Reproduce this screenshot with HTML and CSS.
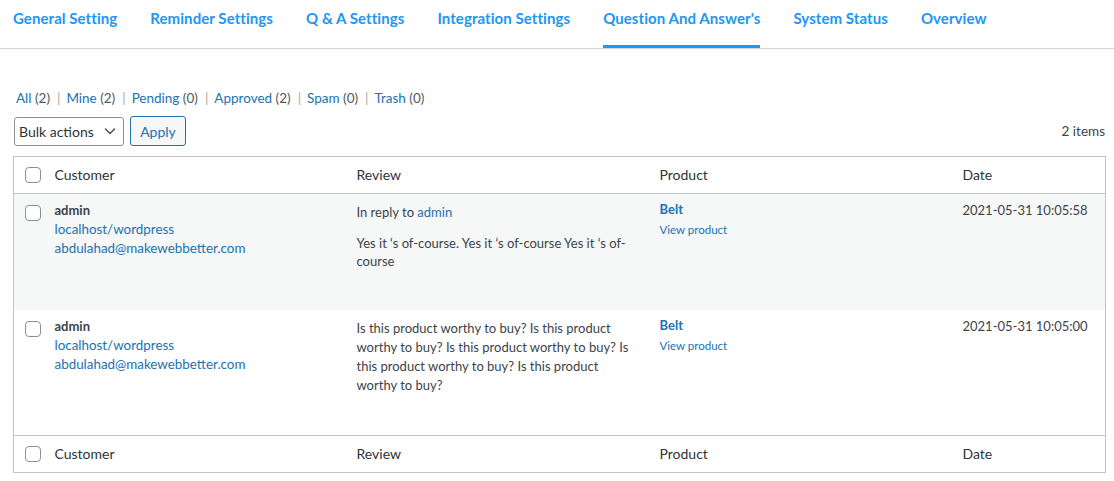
FILE: index.html
```html
<!DOCTYPE html>
<html lang="en">
<head>
<meta charset="utf-8">
<title>Question And Answer's</title>
<link rel="stylesheet" href="styles.css">
</head>
<body>
<nav class="tabs">
  <a class="tab" href="#">General Setting</a>
  <a class="tab" href="#">Reminder Settings</a>
  <a class="tab" href="#">Q &amp; A Settings</a>
  <a class="tab" href="#">Integration Settings</a>
  <a class="tab active" href="#">Question And Answer's</a>
  <a class="tab" href="#">System Status</a>
  <a class="tab" href="#">Overview</a>
</nav>

<main class="content">
  <ul class="subsubsub">
    <li><a href="#">All <span class="count">(2)</span></a><span class="sep">|</span></li>
    <li><a href="#">Mine <span class="count">(2)</span></a><span class="sep">|</span></li>
    <li><a href="#">Pending <span class="count">(0)</span></a><span class="sep">|</span></li>
    <li><a href="#">Approved <span class="count">(2)</span></a><span class="sep">|</span></li>
    <li><a href="#">Spam <span class="count">(0)</span></a><span class="sep">|</span></li>
    <li><a href="#">Trash <span class="count">(0)</span></a></li>
  </ul>

  <div class="tablenav">
    <div class="actions">
      <div class="select">
        <span>Bulk actions</span>
        <svg class="chev" width="14" height="14" viewBox="0 0 14 14"><path d="M2.5 5 L7 9.5 L11.5 5" fill="none" stroke="#50575e" stroke-width="1.6" stroke-linecap="round" stroke-linejoin="round"/></svg>
      </div>
      <button class="button">Apply</button>
    </div>
    <div class="num">2 items</div>
  </div>

  <table class="list">
    <colgroup>
      <col class="c-cb"><col class="c-cust"><col class="c-rev"><col class="c-prod"><col class="c-date">
    </colgroup>
    <thead>
      <tr>
        <th class="cb"><span class="check"></span></th>
        <th>Customer</th>
        <th>Review</th>
        <th>Product</th>
        <th>Date</th>
      </tr>
    </thead>
    <tbody>
      <tr class="alt">
        <td class="cb"><span class="check"></span></td>
        <td class="cust">
          <strong>admin</strong>
          <a href="#">localhost/wordpress</a>
          <a href="#">abdulahad@makewebbetter.com</a>
        </td>
        <td class="rev">
          <div class="reply">In reply to <a href="#">admin</a></div>
          <p class="tight">Yes it ‘s of-course. Yes it ‘s of-course Yes it ‘s of-course</p>
        </td>
        <td class="prod">
          <a class="pname" href="#">Belt</a>
          <a class="view" href="#">View product</a>
        </td>
        <td class="date">2021-05-31 10:05:58</td>
      </tr>
      <tr>
        <td class="cb"><span class="check"></span></td>
        <td class="cust">
          <strong>admin</strong>
          <a href="#">localhost/wordpress</a>
          <a href="#">abdulahad@makewebbetter.com</a>
        </td>
        <td class="rev">
          <p>Is this product worthy to buy? Is this product worthy to buy? Is this product worthy to buy? Is this product worthy to buy? Is this product worthy to buy?</p>
        </td>
        <td class="prod">
          <a class="pname" href="#">Belt</a>
          <a class="view" href="#">View product</a>
        </td>
        <td class="date">2021-05-31 10:05:00</td>
      </tr>
    </tbody>
    <tfoot>
      <tr>
        <th class="cb"><span class="check"></span></th>
        <th>Customer</th>
        <th>Review</th>
        <th>Product</th>
        <th>Date</th>
      </tr>
    </tfoot>
  </table>
</main>
</body>
</html>
```

FILE: styles.css
```css
* { box-sizing: border-box; }

body {
  margin: 0;
  background: #ffffff;
  font-family: "Lato", "Noto Sans", sans-serif;
  color: #3c434a;
  font-size: 13px;
}

a { text-decoration: none; color: #2271b1; }

.tabs {
  display: flex;
  gap: 33px;
  padding-left: 13px;
  height: 49px;
  border-bottom: 1px solid #d4d4d4;
}

.tab {
  display: block;
  height: 48px;
  padding-top: 8px;
  font-size: 15px;
  font-weight: 700;
  letter-spacing: 0.07px;
  line-height: 20px;
  color: #2196f3;
  border-bottom: 3px solid transparent;
  margin-bottom: -1px;
}

.tab.active {
  border-bottom-color: #2196f3;
}

.content {
  padding: 39px 9px 0 13px;
}

.subsubsub {
  list-style: none;
  margin: 0 0 8px 3px;
  padding: 0;
  display: flex;
  font-size: 13.5px;
  line-height: 20px;
}

.subsubsub .count { color: #50575e; }

.subsubsub .sep {
  color: #a7aaad;
  margin: 0 6px 0 7px;
}

.tablenav {
  display: flex;
  justify-content: space-between;
  align-items: center;
  height: 30px;
  margin-bottom: 10px;
  margin-left: 1px;
}

.actions { display: flex; gap: 6px; align-items: center; }

.select {
  width: 110px;
  height: 29px;
  border: 1px solid #8c8f94;
  border-radius: 3px;
  display: flex;
  align-items: center;
  justify-content: space-between;
  padding: 0 6px 0 4px;
  font-size: 14px;
  color: #2c3338;
  background: #fff;
}

.chev { display: block; }

.button {
  height: 30px;
  width: 56px;
  border: 1px solid #2271b1;
  border-radius: 3px;
  background: #f6f7f7;
  color: #2271b1;
  font-family: inherit;
  font-size: 14px;
  padding: 0;
}

.num {
  font-size: 13.5px;
  color: #3c434a;
}

.list {
  width: 1092px;
  border-collapse: collapse;
  border: 1px solid #c3c4c7;
  table-layout: fixed;
}

.c-cb { width: 31px; }
.c-cust { width: 302px; }
.c-rev { width: 303px; }
.c-prod { width: 303px; }
.c-date { width: 153px; }

th {
  text-align: left;
  font-weight: 400;
  font-size: 14px;
  color: #2c3338;
  line-height: 20px;
  padding: 8px 10px;
  height: 36px;
}

thead th { border-bottom: 1px solid #c3c4c7; }
tfoot th { border-top: 1px solid #c3c4c7; }

td {
  vertical-align: top;
  padding: 7px 10px 8px;
  line-height: 19px;
  font-size: 13px;
  color: #3c434a;
}

th.cb, td.cb { padding: 0 0 0 11px; }
th.cb { vertical-align: middle; }
td.cb { padding-top: 11px; }

.check {
  display: block;
  width: 16px;
  height: 16px;
  border: 1px solid #8c8f94;
  border-radius: 4px;
  background: #fff;
}

tr.alt td { background: #f6f7f7; }

.cust strong {
  display: block;
  font-weight: 700;
  color: #3c434a;
  line-height: 19px;
}

.cust a { display: block; font-size: 13.4px; }

.rev { padding-top: 9px; padding-bottom: 40px; }

.reply { margin-bottom: 12px; }

.rev p { margin: 0; }
.rev p.tight { line-height: 18px; }

.prod a { display: block; }

.pname {
  font-weight: 700;
  line-height: 17px;
  margin-bottom: 4px;
}

.view {
  font-size: 11.5px;
  line-height: 15px;
}

.date { color: #3c434a; }
```
